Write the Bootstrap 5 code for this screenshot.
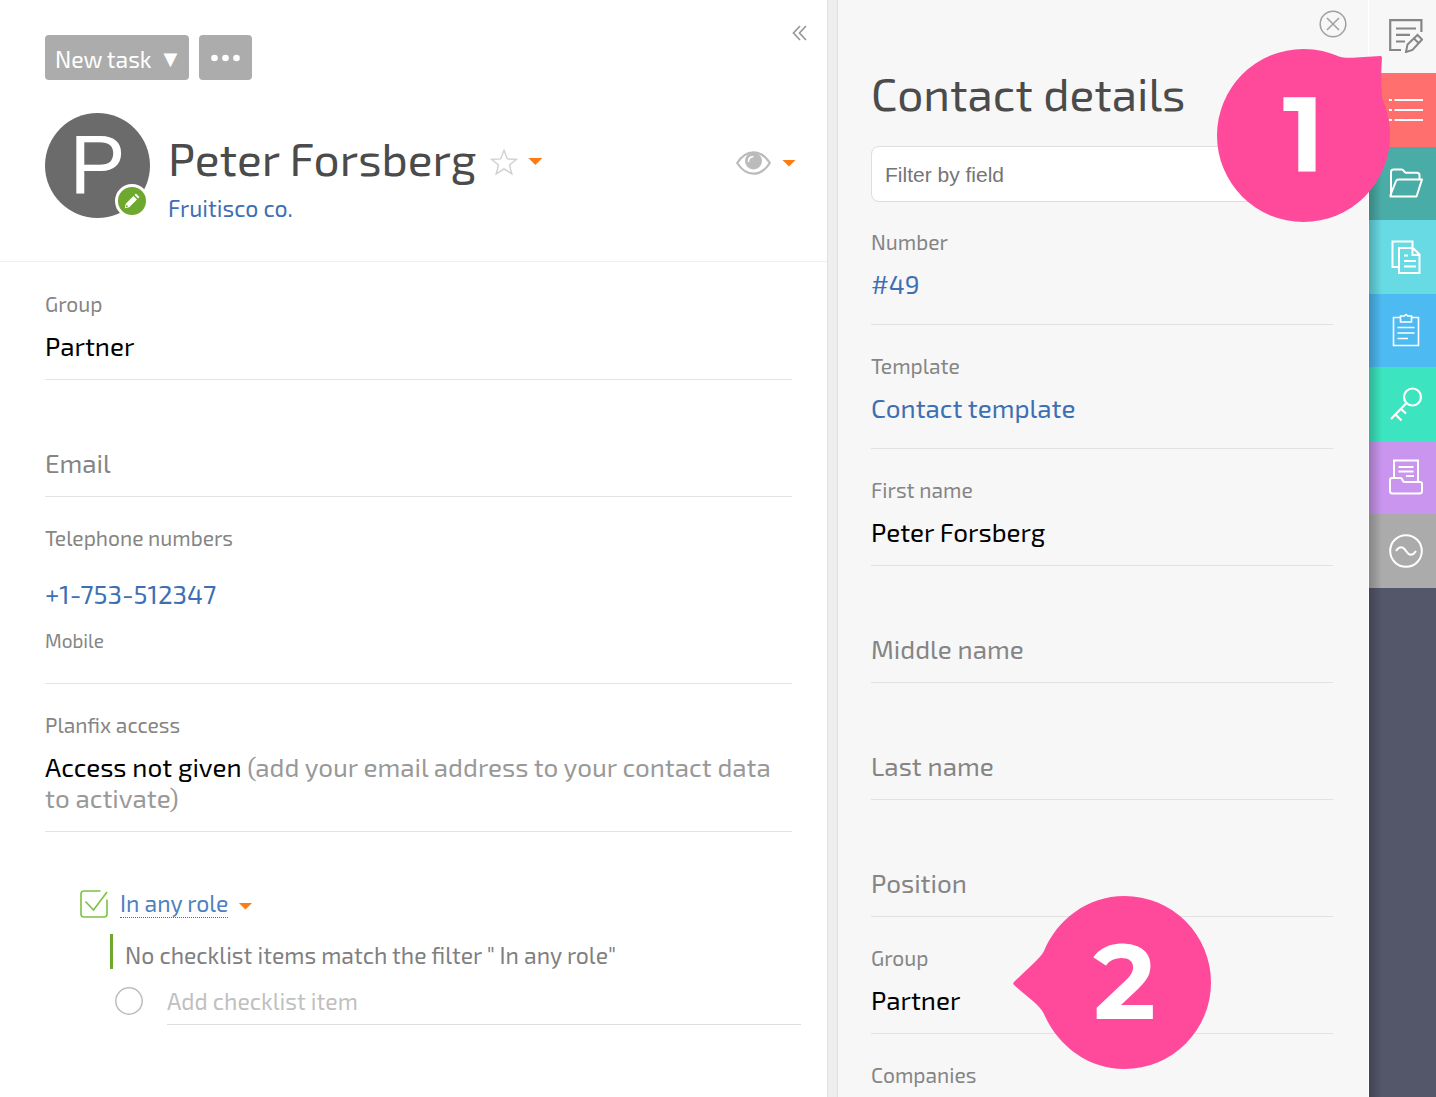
<!DOCTYPE html>
<html lang="en">
<head>
<meta charset="utf-8">
<meta name="viewport" content="width=device-width, initial-scale=1">
<title>Peter Forsberg</title>
<link href="https://cdn.jsdelivr.net/npm/bootstrap@5.3.0/dist/css/bootstrap.min.css" rel="stylesheet">
<style>
  body { font-family: "Exo 2", Roboto, "Open Sans", sans-serif; font-size: 26px; line-height: 31px; color: #000; background: #fff; }
  a { color: #3d6fb4; text-decoration: none; }
  .icon { display: block; fill: none; stroke: currentColor; }
  .bare { border: 0; background: none; padding: 0; color: inherit; }

  /* left column */
  .contact { min-width: 0; }
  .contact-head { padding: 35px 31px 39px 45px; border-bottom: 1px solid #eee; position: relative; }
  .toolbar { gap: 10px; margin-bottom: 33px; }
  .btn-tool { height: 45px; background: #acacac; color: #fff; border: 0; border-radius: 4px; font-size: 23px; line-height: 30px; padding: 2px 12px 0 10px; }
  .btn-tool:hover { background: #9a9a9a; color: #fff; }
  .btn-tool .tri { font-family: "DejaVu Sans", sans-serif; font-size: 18px; margin-left: 12px; }
  .btn-dots { padding: 0 12px; }
  .collapse-btn { position: absolute; top: 25px; right: 20px; color: #999; }
  .avatar { width: 105px; height: 105px; background: #6b6b6b; color: #fff; font-family: "Liberation Sans", Arial, sans-serif; font-size: 84px; line-height: 103px; text-align: center; position: relative; flex: none; }
  .avatar-edit { position: absolute; right: 1px; bottom: 0; width: 34px; height: 34px; background: #6ea82e; border: 3px solid #fff; border-radius: 50%; }
  .who { margin-left: 18px; padding-top: 17px; }
  .title { font-size: 46px; line-height: 56px; font-weight: 400; color: #4b4b4b; margin: 0; }
  .company { font-size: 23px; line-height: 28px; margin-top: 8px; display: block; }
  .caret { width: 14px; height: 7px; background: #ff7a0f; clip-path: polygon(0 0, 100% 0, 50% 100%); display: block; }
  .fav-btn { margin-left: 14px; padding-top: 7px; gap: 10px; }
  .icon-star { color: #d0d0d0; }
  .icon-eye { color: #bbb; }
  .eye-group { gap: 11px; height: 100px; }

  /* field rows */
  .fields { padding: 1px 35px 0 45px; }
  .field { border-bottom: 1px solid #e2e2e2; padding: 29px 0 18px; }
  .field-label { color: #858585; font-size: 21px; line-height: 24px; margin-bottom: 14px; }
  .field-empty { padding-top: 67px; color: #858585; }
  .field-roomy { padding-bottom: 25px; }
  .field-phone { padding-bottom: 30px; }
  .field-phone .field-label { margin-bottom: 28px; }
  .phone-kind { color: #858585; font-size: 19px; line-height: 24px; margin-top: 20px; }
  .hint { color: #999; }

  /* checklist */
  .checklist { padding: 56px 26px 0 80px; font-size: 23px; }
  .icon-check { color: #7cc142; }
  .role { border-bottom: 1px dotted #3d6fb4; line-height: 27px; color: #4f81c0; margin: 0 10px 0 12px; }
  .check-note { margin: 14px 0 0 30px; border-left: 3px solid #6ea82e; padding: 6px 0 0 12px; color: #808080; height: 35px; }
  .add-row { margin: 9px 0 0 35px; }
  .add-row .ring { color: #bdbdbd; margin-top: 9px; flex: none; }
  .add-input { margin-left: 24px; height: 47px; border: 0; border-bottom: 1px solid #dedede; padding: 0; color: #444; background: transparent; min-width: 0; outline: 0; }
  .add-input::placeholder { color: #c0c0c0; opacity: 1; }

  /* right panel */
  .gutter { flex: 0 0 11px; background: #eee; border: solid #e0e0e0; border-width: 0 1px; }
  .details { flex: 0 0 531px; background: #f7f7f7; border-right: 1px solid #fff; padding: 65px 35px 0 33px; position: relative; }
  .close-btn { position: absolute; top: 10px; right: 21px; color: #a0a0a0; }
  .filter { height: 56px; margin: 25px 0 -1px; border: 1px solid #dedede; border-radius: 8px; padding: 2px 13px 0; font-family: "Liberation Sans", Arial, sans-serif; font-size: 21px; }
  .filter::placeholder { color: #757575; opacity: 1; }

  /* tab rail */
  .rail { flex: 0 0 67px; background: #535769; position: relative; }
  .rail::before { content: ""; position: absolute; top: 73px; bottom: 0; left: 0; width: 13px; background: linear-gradient(90deg, rgba(0,0,0,.22), rgba(0,0,0,0)); pointer-events: none; }
  .tab { height: 73px; padding: 0 0 1px 6px; color: #fff; }
  .tab:nth-child(even) { height: 74px; }
  .tab-edit { background: #f7f7f7; color: #868686; }
  .tab-list { background: #ff6f6e; }
  .tab-files { background: #4aaca7; }
  .tab-docs { background: #67dae4; }
  .tab-board { background: #4dbaf2; }
  .tab-key { background: #3ce5bf; }
  .tab-tray { background: #ca95ee; }
  .tab-wave { background: #ababab; }

  /* numbered markers */
  .marker { position: absolute; color: #fff; pointer-events: none; }
  .marker svg { display: block; fill: #ff4a9b; }
  .marker b { position: absolute; top: 0; right: 0; width: 173px; line-height: 171px; text-align: center; font-family: Montserrat, Roboto, sans-serif; font-weight: 700; font-size: 106px; }
  .marker-one { top: 49px; right: 46px; }
  .marker-two { top: 896px; right: 225px; }
</style>
</head>
<body>
<div class="d-flex vh-100 overflow-hidden position-relative">
  <main class="contact flex-grow-1">
    <header class="contact-head">
      <div class="toolbar d-flex">
        <button type="button" class="btn btn-tool d-flex align-items-center">New task <span class="tri">▼</span></button>
        <button type="button" class="btn btn-tool btn-dots" aria-label="More actions">
          <svg class="icon" width="29" height="8" viewBox="0 0 29 8"><g fill="#fff" stroke="none"><circle cx="3.500" cy="4" r="3.300"/><circle cx="14.500" cy="4" r="3.300"/><circle cx="25.500" cy="4" r="3.300"/></g></svg>
        </button>
      </div>
      <button type="button" class="bare collapse-btn" aria-label="Collapse panel">
        <svg class="icon" width="15" height="16" viewBox="0 0 15 16" stroke-width="1.700"><path d="M8 1 1.500 8 8 15M14 1 7.500 8l6.500 7"/></svg>
      </button>
      <div class="d-flex align-items-start">
        <div class="avatar rounded-circle">P
          <button type="button" class="avatar-edit d-flex align-items-center justify-content-center p-0" aria-label="Edit contact">
            <svg width="16" height="16" viewBox="0 0 16 16" fill="#fff"><path d="M.8 15.200l.9-4.400 7.800-7.800 3.500 3.500-7.800 7.800zM10.600 1.900l1.300-1.300 3.500 3.500-1.300 1.300z"/><circle cx="2.800" cy="13.200" r=".9" fill="#6ea82e"/></svg>
          </button>
        </div>
        <div class="who">
          <div class="d-flex align-items-center">
            <h1 class="title">Peter Forsberg</h1>
            <button type="button" class="bare fav-btn d-flex align-items-center" aria-label="Favourite">
              <svg class="icon icon-star" width="28" height="28" viewBox="0 0 30 28" stroke-width="1.500"><path d="M15 1.500l3.600 9.200 9.900.4-7.700 6.100 2.600 9.500-8.400-5.300-8.400 5.300 2.600-9.500L1.500 11.100l9.900-.4z"/></svg>
              <span class="caret"></span>
            </button>
          </div>
          <a class="company" href="#">Fruitisco co.</a>
        </div>
        <button type="button" class="bare eye-group d-flex align-items-center ms-auto" aria-label="Visibility">
          <svg class="icon icon-eye" width="35" height="24" viewBox="0 0 35 24"><path stroke-width="2.200" d="M1.200 12Q8 1.300 17.500 1.300T33.800 12Q27 22.700 17.500 22.700T1.200 12z"/><circle cx="17.500" cy="10" r="8.500" fill="#bbb" stroke="none"/><path d="M12.500 11q-.3-5 5-5.500" style="stroke:#fff" stroke-width="1.600"/></svg>
          <span class="caret"></span>
        </button>
      </div>
    </header>

    <section class="fields">
      <div class="field"><div class="field-label">Group</div><div>Partner</div></div>
      <div class="field field-empty">Email</div>
      <div class="field field-phone">
        <div class="field-label">Telephone numbers</div>
        <div><a href="#">+1-753-512347</a></div>
        <div class="phone-kind">Mobile</div>
      </div>
      <div class="field">
        <div class="field-label">Planfix access</div>
        <div>Access not given <span class="hint">(add your email address to your contact data to activate)</span></div>
      </div>
    </section>

    <section class="checklist">
      <div class="d-flex align-items-center">
        <svg class="icon icon-check" width="28" height="32" viewBox="0 0 28 32" stroke-width="1.600"><path d="M20.500 3H4Q1 3 1 6v20q0 3 3 3h20q3 0 3-3V11.500"/><path d="M5.500 13.500 13.500 22 27 4"/></svg>
        <a class="role" href="#">In any role</a>
        <span class="caret mt-1"></span>
      </div>
      <div class="check-note">No checklist items match the filter " In any role"</div>
      <div class="add-row d-flex">
        <svg class="icon ring" width="28" height="28" viewBox="0 0 28 28" stroke-width="1.500"><circle cx="14" cy="14" r="13.200"/></svg>
        <input class="add-input flex-grow-1" type="text" placeholder="Add checklist item" aria-label="Add checklist item">
      </div>
    </section>
  </main>

  <div class="gutter"></div>

  <aside class="details">
    <button type="button" class="bare close-btn" aria-label="Close">
      <svg class="icon" width="28" height="28" viewBox="0 0 28 28" stroke-width="1.500"><circle cx="14" cy="14" r="12.800"/><path d="M8 8l12 12M20 8 8 20"/></svg>
    </button>
    <h2 class="title">Contact details</h2>
    <input class="filter form-control" type="text" placeholder="Filter by field" aria-label="Filter by field">
    <div class="field field-roomy"><div class="field-label">Number</div><div><a href="#">#49</a></div></div>
    <div class="field field-roomy"><div class="field-label">Template</div><div><a href="#">Contact template</a></div></div>
    <div class="field"><div class="field-label">First name</div><div>Peter Forsberg</div></div>
    <div class="field field-empty">Middle name</div>
    <div class="field field-empty">Last name</div>
    <div class="field field-empty">Position</div>
    <div class="field"><div class="field-label">Group</div><div>Partner</div></div>
    <div class="field border-0 pb-0"><div class="field-label mb-0">Companies</div></div>
  </aside>

  <nav class="rail" aria-label="Sections">
    <a href="#" class="tab tab-edit d-flex align-items-center justify-content-center" aria-label="Description">
      <svg class="icon" width="34" height="34" viewBox="0 0 34 34" stroke-width="2.200"><path d="M12 31H1.200V1.200h31.200V13"/><path d="M7 9.500h20M7 15.800h14M7 22.500h9"/><path stroke-width="2" d="M17 33l1.500-7.500L28.500 16l4.500 4.500L23.500 31zM25 19.500l4.500 4.500"/></svg>
    </a>
    <a href="#" class="tab tab-list d-flex align-items-center justify-content-center" aria-label="Details">
      <svg class="icon" width="34" height="24" viewBox="0 0 34 24" stroke-width="2.200"><path d="M0 2h3M5.500 2H34M0 12h3M5.500 12H34M0 22h3M5.500 22H34"/></svg>
    </a>
    <a href="#" class="tab tab-files d-flex align-items-center justify-content-center" aria-label="Files">
      <svg class="icon" width="34" height="30" viewBox="0 0 34 30" stroke-width="2" stroke-linejoin="round"><path d="M2 28V4q0-2.500 2.500-2.500h8q1.500 0 2.300 1.500t2.200 1.800h11q2.500 0 2.500 2.500V11M1.500 28.500h26L33 11.500H9.500Q7.500 11.500 7 13L1.500 27z"/></svg>
    </a>
    <a href="#" class="tab tab-docs d-flex align-items-center justify-content-center" aria-label="Documents">
      <svg class="icon" width="30" height="34" viewBox="0 0 30 34" stroke-width="2"><path d="M7 27H1.500V1.500h20V8M8 8h14l6.500 6.500V33H8zM21.500 8v7H29M13 15.500h4M13 21h12M13 26.500h12"/></svg>
    </a>
    <a href="#" class="tab tab-board d-flex align-items-center justify-content-center" aria-label="Tasks">
      <svg class="icon" width="28" height="34" viewBox="0 0 28 34" stroke-width="1.600"><path d="M8.500 4.500h-7v28h25v-28h-7M8.500 3h4q1.500-3 3 0h4v6h-11zM5.500 14.500h17M5.500 20h17M5.500 25.500H16"/></svg>
    </a>
    <a href="#" class="tab tab-key d-flex align-items-center justify-content-center" aria-label="Access">
      <svg class="icon" width="34" height="34" viewBox="0 0 34 34" stroke-width="2.200"><circle cx="23.500" cy="10" r="8.500"/><path d="M17.500 16 2 32M6.500 27.500l6 6M12 22l5 4.500"/></svg>
    </a>
    <a href="#" class="tab tab-tray d-flex align-items-center justify-content-center" aria-label="Archive">
      <svg class="icon" width="34" height="36" viewBox="0 0 34 36" stroke-width="2"><path d="M5 19V1.500h24V22M9.500 8h15M9.500 12.500h15M17 17h8"/><path d="M1 21q0-2 2-2h8q2 0 2.500 2t2.500 2h15q2 0 2 2v7q0 2.500-2.500 2.500h-27Q1 34.500 1 32z"/></svg>
    </a>
    <a href="#" class="tab tab-wave d-flex align-items-center justify-content-center" aria-label="Activity">
      <svg class="icon" width="34" height="34" viewBox="0 0 34 34" stroke-width="2"><circle cx="17" cy="17" r="15.800"/><path d="M7 17q5-7.500 10 0t10 0"/></svg>
    </a>
  </nav>

  <div class="marker marker-one">
    <svg width="173" height="173" viewBox="0 0 173 173"><path d="M86.500 0C100 0 112 3 122 7.500C128 10 147 8 163.500 7Q165 7 165 8.500C164 22 164 42 165.500 50C170 61 173 73 173 86.500A86.500 86.500 0 1 1 86.500 0z"/></svg>
    <b>1</b>
  </div>
  <div class="marker marker-two">
    <svg width="198" height="173" viewBox="0 0 198 173"><path d="M111.500 0A86.500 86.500 0 1 1 111.500 173C75 173 45 150 31 118C27 109 14 101 1 89Q-.5 87.500 1 86C14 73 27 63 31 55C44 24 74 0 111.500 0z"/></svg>
    <b>2</b>
  </div>
</div>
<script src="https://cdn.jsdelivr.net/npm/bootstrap@5.3.0/dist/js/bootstrap.bundle.min.js"></script>
</body>
</html>
